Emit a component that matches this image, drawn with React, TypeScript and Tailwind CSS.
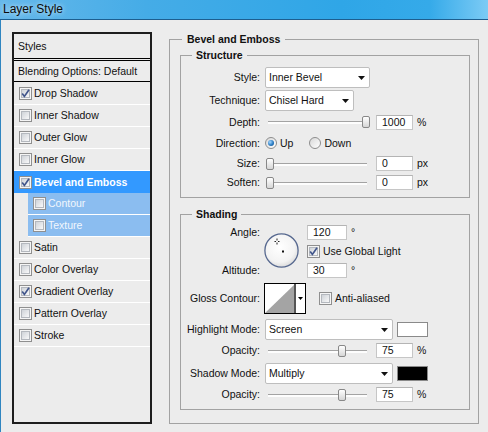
import React from "react";

const FONT = "font-['Liberation_Sans',Arial,sans-serif]";

function Check({ on }: { on?: boolean }) {
  return (
    <span className="relative flex h-[13px] w-[13px] shrink-0 items-center justify-center border border-[#8f8f8f] bg-[#f5f5f5]">
      <span className="h-[9px] w-[9px] border border-[#b4b8be] bg-[linear-gradient(135deg,#cfd3d8,#f8f8f9)]" />
      {on && (
        <svg className="absolute left-0 top-0" width="11" height="11" viewBox="0 0 11 11">
          <path d="M2.2 5.4 L4.4 8.4 L9 1.8" fill="none" stroke="#41558b" strokeWidth="1.7" />
        </svg>
      )}
    </span>
  );
}

function Radio({ on }: { on?: boolean }) {
  return (
    <span className="flex h-[12px] w-[12px] shrink-0 items-center justify-center rounded-full border border-[#8d8d8d] bg-[linear-gradient(135deg,#d8d8d8,#ffffff)]">
      {on && (
        <span className="h-[6px] w-[6px] rounded-full bg-[radial-gradient(circle_at_35%_35%,#a6d8ff,#2a7cc4_55%,#0d4a85)]" />
      )}
    </span>
  );
}

function Num({ v, w = "w-[37px]" }: { v: string; w?: string }) {
  return (
    <span className={`flex h-[15px] ${w} shrink-0 items-center border border-[#c6c6c6] border-t-[#b4b4b4] bg-white pl-[5px]`}>
      {v}
    </span>
  );
}

function Drop({ v, w }: { v: string; w: string }) {
  return (
    <span className={`flex h-[21px] ${w} shrink-0 items-center justify-between rounded-[2px] border border-[#bebebe] bg-white pl-[3px] pr-[4px]`}>
      <span>{v}</span>
      <svg width="7" height="4" viewBox="0 0 7 4">
        <path d="M0 0H7L3.5 4Z" fill="#111" />
      </svg>
    </span>
  );
}

function Slider({ at }: { at: number }) {
  return (
    <span className="relative block h-[14px] w-[105px] shrink-0">
      <span className="absolute left-[3px] right-[3px] top-[6px] h-[3px] border-t border-[#a3a3a3] bg-[#fdfdfd]" />
      <span
        className="absolute top-[1px] h-[12px] w-[8px] rounded-[2px] border border-[#888888] bg-[linear-gradient(#ffffff,#d6d6d6)]"
        style={{ left: at }}
      />
    </span>
  );
}

function Label({ children }: { children: React.ReactNode }) {
  return <span className="w-[79px] shrink-0 text-right">{children}</span>;
}

function SliderRow({ label, at, value, unit, h }: { label: string; at: number; value: string; unit: string; h: string }) {
  return (
    <div className={`flex ${h} items-center`}>
      <Label>{label}</Label>
      <span className="ml-[5px]">
        <Slider at={at} />
      </span>
      <span className="ml-[6px]">
        <Num v={value} />
      </span>
      <span className="ml-[4px]">{unit}</span>
    </div>
  );
}

// Etched group frame; the caption is pulled up onto the top rule.
function Group({
  title,
  className,
  captionClass,
  children,
}: {
  title: string;
  className: string;
  captionClass: string;
  children: React.ReactNode;
}) {
  return (
    <div className={`shrink-0 border border-[#a2a2a2] ${className}`}>
      <div className={`-mt-[7px] w-fit bg-[#ececec] font-bold leading-[13px] ${captionClass}`}>{title}</div>
      {children}
    </div>
  );
}

function AngleDial() {
  return (
    <svg width="36" height="36" viewBox="0 0 36 36">
      <defs>
        <radialGradient id="dialFill" cx="0.45" cy="0.4" r="0.6">
          <stop offset="0" stopColor="#ffffff" />
          <stop offset="0.75" stopColor="#f3f3f3" />
          <stop offset="1" stopColor="#dcdcdc" />
        </radialGradient>
      </defs>
      <circle cx="17.5" cy="17.5" r="16.6" fill="url(#dialFill)" stroke="#56688f" strokeWidth="1.3" />
      <path d="M10.5 8.5H12M14 8.5H15.5M13 5.5V7.5M13 9.5V11.5" stroke="#222" strokeWidth="1" />
      <rect x="18" y="17.5" width="2" height="2" fill="#111" />
    </svg>
  );
}

function ContourPicker() {
  return (
    <span className="flex h-[31px] w-[42px] shrink-0 border border-black bg-white">
      <svg width="29" height="29" viewBox="0 0 29 29" className="shrink-0">
        <rect width="29" height="29" fill="#ffffff" />
        <polygon points="0,29 29,1 29,29" fill="#a4a4a4" />
      </svg>
      <span className="h-full w-[2px] bg-[#555555]" />
      <span className="flex flex-1 items-center justify-center">
        <svg width="5" height="3" viewBox="0 0 5 3">
          <path d="M0 0H5L2.5 3Z" fill="#000" />
        </svg>
      </span>
    </span>
  );
}

function Swatch({ color }: { color: string }) {
  return <span className={`ml-[4px] h-[15px] w-[31px] shrink-0 border border-[#8a8a8a] ${color}`} />;
}

type StyleItem = { label: string; on?: boolean; selected?: boolean; sub?: boolean };

const styleItems: StyleItem[] = [
  { label: "Drop Shadow", on: true },
  { label: "Inner Shadow" },
  { label: "Outer Glow" },
  { label: "Inner Glow" },
  { label: "Bevel and Emboss", on: true, selected: true },
  { label: "Contour", sub: true },
  { label: "Texture", sub: true },
  { label: "Satin" },
  { label: "Color Overlay" },
  { label: "Gradient Overlay", on: true },
  { label: "Pattern Overlay" },
  { label: "Stroke" },
];

function StyleRow({ item }: { item: StyleItem }) {
  if (item.selected) {
    return (
      <div className="flex h-[22px] items-center bg-[#3399ff] pl-[5px] font-bold text-white">
        <Check on={item.on} />
        <span className="ml-[2px]">{item.label}</span>
      </div>
    );
  }
  if (item.sub) {
    return (
      <div className="flex h-[22px]">
        <span className="w-[14px] shrink-0" />
        <div className="flex flex-1 items-center border-b border-white bg-[#8bbdf0] pl-[5px] text-[#f2f7fd]">
          <Check on={item.on} />
          <span className="ml-[2px]">{item.label}</span>
        </div>
      </div>
    );
  }
  return (
    <div className="flex h-[22px] items-center border-b border-white pl-[5px]">
      <Check on={item.on} />
      <span className="ml-[2px]">{item.label}</span>
    </div>
  );
}

export default function App() {
  return (
    <div className={`flex h-[432px] w-[488px] flex-col overflow-hidden bg-[#ececec] text-[10.5px] leading-none text-[#111] ${FONT}`}>
      {/* title bar */}
      <div className="flex h-[20px] shrink-0 items-center border-b border-[#1d5e8f] bg-[linear-gradient(90deg,#66b8ea_0%,#45ace7_30%,#2fa6e7_70%,#35aae9_88%,#7ccbf5_100%)] pb-[2px] pl-[3px]">
        <span className="text-[12px] text-[#0c0c0c] [text-shadow:0_0_5px_rgba(255,255,255,0.85)]">Layer Style</span>
      </div>

      <div className="flex flex-1 border-l border-[#2f85c0] pl-[11px] pt-[12px]">
        {/* styles list */}
        <div className="flex h-[392px] w-[140px] shrink-0 flex-col border-2 border-[#1d1d1d]">
          <div className="flex h-[25px] shrink-0 items-center border-b border-black pl-[4px]">Styles</div>
          <div className="mt-[1px] flex h-[22px] shrink-0 items-center border-y border-black pl-[4px]">
            Blending Options: Default
          </div>
          <div className="h-[1px] shrink-0" />
          {styleItems.map((it) => (
            <StyleRow key={it.label} item={it} />
          ))}
        </div>

        {/* settings */}
        <Group
          title="Bevel and Emboss"
          className="ml-[17px] mt-[7px] h-[385px] w-[310px] pl-[10px] pr-[8px]"
          captionClass="ml-[2px] px-[5px]"
        >
          <Group title="Structure" className="mt-[9px] h-[143px] w-[290px]" captionClass="ml-[11px] px-[4px]">
            <div className="mt-[4px] flex h-[23px] items-center">
              <Label>Style:</Label>
              <span className="ml-[5px]">
                <Drop v="Inner Bevel" w="w-[105px]" />
              </span>
            </div>
            <div className="flex h-[23px] items-center">
              <Label>Technique:</Label>
              <span className="ml-[5px]">
                <Drop v="Chisel Hard" w="w-[89px]" />
              </span>
            </div>
            <SliderRow label="Depth:" at={97} value="1000" unit="%" h="h-[20px]" />
            <div className="flex h-[22px] items-center">
              <Label>Direction:</Label>
              <span className="ml-[5px]">
                <Radio on />
              </span>
              <span className="ml-[3px]">Up</span>
              <span className="ml-[16px]">
                <Radio />
              </span>
              <span className="ml-[3px]">Down</span>
            </div>
            <SliderRow label="Size:" at={1} value="0" unit="px" h="h-[19px]" />
            <SliderRow label="Soften:" at={1} value="0" unit="px" h="h-[19px]" />
          </Group>

          <Group title="Shading" className="mt-[16px] h-[196px] w-[290px]" captionClass="ml-[11px] px-[4px]">
            <div className="mt-[2px] flex h-[56px]">
              <div className="flex w-[79px] shrink-0 flex-col">
                <span className="flex h-[18px] items-center justify-end">Angle:</span>
                <span className="h-[20px]" />
                <span className="flex h-[18px] items-center justify-end">Altitude:</span>
              </div>
              <span className="ml-[4px] self-center">
                <AngleDial />
              </span>
              <div className="ml-[7px] flex flex-col">
                <span className="flex h-[18px] items-center">
                  <Num v="120" w="w-[40px]" />
                  <span className="ml-[4px]">°</span>
                </span>
                <span className="flex h-[20px] items-center">
                  <Check on />
                  <span className="ml-[3px]">Use Global Light</span>
                </span>
                <span className="flex h-[18px] items-center">
                  <Num v="30" w="w-[40px]" />
                  <span className="ml-[4px]">°</span>
                </span>
              </div>
            </div>

            <div className="mt-[4px] flex h-[31px] items-center">
              <Label>Gloss Contour:</Label>
              <span className="ml-[4px]">
                <ContourPicker />
              </span>
              <span className="ml-[13px]">
                <Check />
              </span>
              <span className="ml-[3px]">Anti-aliased</span>
            </div>

            <div className="mt-[5px] flex h-[21px] items-center">
              <Label>Highlight Mode:</Label>
              <span className="ml-[5px]">
                <Drop v="Screen" w="w-[128px]" />
              </span>
              <Swatch color="bg-white" />
            </div>
            <SliderRow label="Opacity:" at={73} value="75" unit="%" h="h-[21px]" />
            <div className="mt-[2px] flex h-[21px] items-center">
              <Label>Shadow Mode:</Label>
              <span className="ml-[5px]">
                <Drop v="Multiply" w="w-[128px]" />
              </span>
              <Swatch color="bg-black" />
            </div>
            <SliderRow label="Opacity:" at={73} value="75" unit="%" h="h-[21px]" />
          </Group>
        </Group>
      </div>
    </div>
  );
}
